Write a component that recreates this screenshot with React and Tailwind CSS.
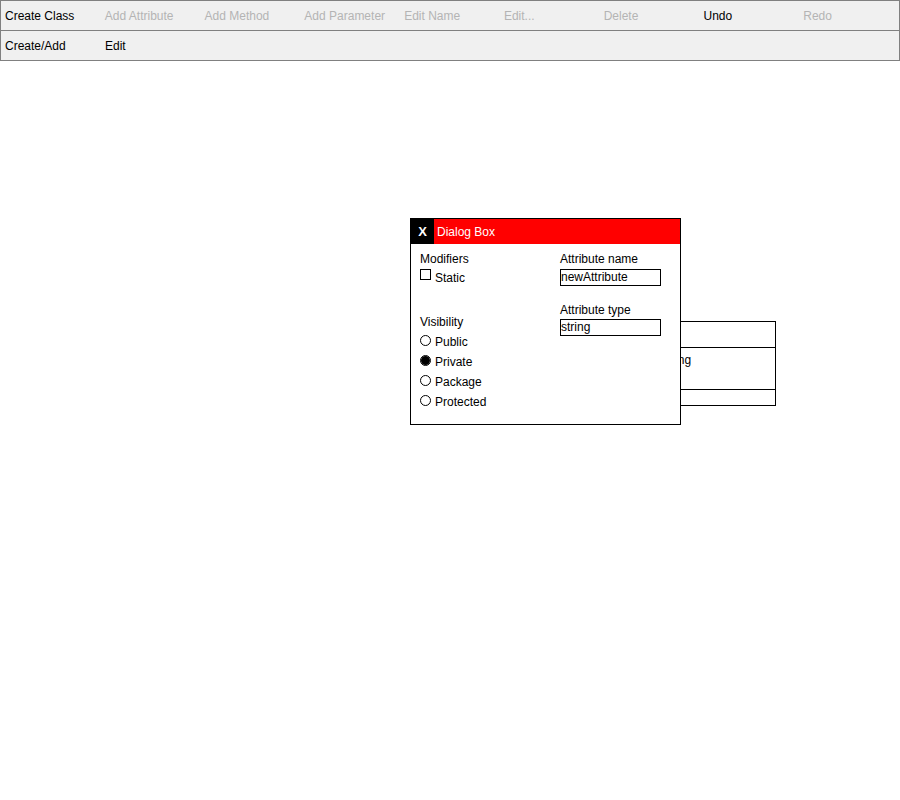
import React from "react";

const row1 = [
  { t: "Create Class", on: true },
  { t: "Add Attribute", on: false },
  { t: "Add Method", on: false },
  { t: "Add Parameter", on: false },
  { t: "Edit Name", on: false },
  { t: "Edit...", on: false },
  { t: "Delete", on: false },
  { t: "Undo", on: true },
  { t: "Redo", on: false },
];

function Radio({ checked, label }) {
  return (
    <div className="flex h-[20px] items-start">
      <div className="w-[11px] h-[11px] rounded-full border border-black bg-white flex items-center justify-center">
        {checked && <div className="w-[9px] h-[9px] rounded-full bg-black" />}
      </div>
      <span className="ml-[4px] leading-[14px]">{label}</span>
    </div>
  );
}

export default function App() {
  return (
    <div className="relative w-[900px] h-[800px] bg-white font-['Liberation_Sans',Arial,sans-serif] text-[12px] text-black overflow-hidden">
      <div className="border border-[#808080] bg-[#f0f0f0]">
        <div className="flex h-[30px] items-center pt-[1px] border-b border-[#808080]">
          {row1.map((b) => (
            <div
              key={b.t}
              className={
                "w-[100px] pl-[4px] leading-[14px] " +
                (b.on ? "text-black" : "text-[#b4b4b4]")
              }
            >
              {b.t}
            </div>
          ))}
        </div>
        <div className="flex h-[29px] items-center pt-[1px]">
          <div className="w-[100px] pl-[4px] leading-[14px]">Create/Add</div>
          <div className="w-[100px] pl-[4px] leading-[14px]">Edit</div>
        </div>
      </div>

      {/* class box on the canvas, partly behind the dialog */}
      <div className="absolute left-[490px] top-[321px] w-[286px] border border-black bg-white">
        <div className="h-[26px] border-b border-black flex items-center justify-center leading-[14px]">
          NewClass
        </div>
        <div className="h-[42px] border-b border-black pt-[5px] text-center leading-[14px]">
          + newAttribute : string
        </div>
        <div className="h-[15px]" />
      </div>

      {/* dialog */}
      <div className="absolute left-[410px] top-[218px] w-[271px] h-[207px] border border-black bg-white">
        <div className="flex h-[25px] bg-[#ff0000] items-center">
          <div className="w-[23px] h-full bg-black text-white font-bold flex items-center justify-center text-[13px]">
            X
          </div>
          <span className="ml-[3px] text-white leading-[14px]">Dialog Box</span>
        </div>
        <div className="flex pt-[8px]">
          <div className="w-[149px] pl-[9px] flex flex-col">
            <div className="leading-[14px] h-[14px]">Modifiers</div>
            <div className="flex items-start mt-[3px] h-[18px]">
              <div className="w-[11px] h-[11px] border border-black bg-white" />
              <span className="ml-[4px] mt-[2px] leading-[14px]">Static</span>
            </div>
            <div className="mt-[28px] leading-[14px] h-[14px]">Visibility</div>
            <div className="mt-[6px] flex flex-col">
              <Radio label="Public" />
              <Radio label="Private" checked />
              <Radio label="Package" />
              <Radio label="Protected" />
            </div>
          </div>
          <div className="flex flex-col">
            <div className="leading-[14px] h-[14px]">Attribute name</div>
            <div className="mt-[3px] w-[101px] h-[17px] border border-black leading-[15px] overflow-hidden">
              newAttribute
            </div>
            <div className="mt-[17px] leading-[14px] h-[14px]">Attribute type</div>
            <div className="mt-[2px] w-[101px] h-[17px] border border-black leading-[15px] overflow-hidden">
              string
            </div>
          </div>
        </div>
      </div>
    </div>
  );
}
